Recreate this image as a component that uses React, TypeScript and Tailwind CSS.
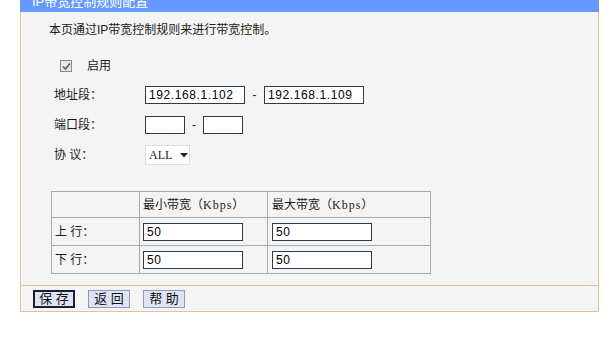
import React from "react";

const font = { fontFamily: '"Liberation Sans", "Noto Sans CJK SC", sans-serif' };
const serif = { fontFamily: '"Liberation Serif", "Noto Sans CJK SC", serif' };

function Field({ value, w }: { value: string; w: string }) {
  return (
    <div
      className={`${w} h-[18px] border border-[#2c3a4c] bg-white px-[3px] text-[12px] leading-[16px] tracking-[0.6px] text-black`}
    >
      {value}
    </div>
  );
}

function Btn({ label, active }: { label: string; active?: boolean }) {
  return (
    <div
      className={`w-[42px] h-[18px] flex items-center justify-center bg-[#dfe3f8] text-[13px] leading-none text-[#111] ${
        active ? "border-2 border-[#1a1f33]" : "border border-[#8e98b8]"
      }`}
    >
      {label}
    </div>
  );
}

export default function App() {
  return (
    <div className="w-[610px] h-[338px] bg-white overflow-hidden" style={font}>
      <div className="ml-[20px] w-[579px]">
        {/* title bar, cut at the top of the frame */}
        <div className="h-[12px] bg-[#6699ff] overflow-hidden">
          <div className="-mt-[7px] pl-[12px] text-[13px] leading-[18px] text-white">IP带宽控制规则配置</div>
        </div>

        <div className="border-x border-[#e4c09c] bg-[#f4f4f4]">
          <div className="pt-[12px] pl-[28px] text-[12px] leading-[12px] text-[#1a1a1a]">
            本页通过IP带宽控制规则来进行带宽控制。
          </div>

          <div className="mt-[23px] ml-[39px] flex items-center h-[14px]">
            <span className="w-[12px] h-[12px] border border-[#8a8a8a] bg-[#e6e6e6] flex items-center justify-center">
              <svg width="9" height="9" viewBox="0 0 9 9">
                <path d="M1 4.5 L3.5 7 L8 1.5" stroke="#5a5a5a" strokeWidth="1.6" fill="none" />
              </svg>
            </span>
            <span className="ml-[15px] text-[12px] text-[#1a1a1a]">启用</span>
          </div>

          <div className="mt-[13px] ml-[33px] flex items-center h-[18px] text-[12px] text-[#1a1a1a]">
            <span className="w-[91px]">地址段：</span>
            <Field value="192.168.1.102" w="w-[100px]" />
            <span className="w-[19px] text-center">-</span>
            <Field value="192.168.1.109" w="w-[100px]" />
          </div>

          <div className="mt-[12px] ml-[33px] flex items-center h-[18px] text-[12px] text-[#1a1a1a]">
            <span className="w-[91px]">端口段：</span>
            <Field value="" w="w-[40px]" />
            <span className="w-[18px] text-center">-</span>
            <Field value="" w="w-[40px]" />
          </div>

          <div className="mt-[11px] ml-[33px] flex items-center h-[20px] text-[12px] text-[#1a1a1a]">
            <span className="w-[91px]">协 议：</span>
            <div className="w-[45px] h-[20px] border border-[#dcdcdc] bg-white flex items-center pl-[3px] gap-[8px]">
              <span className="text-[12px] leading-none" style={serif}>ALL</span>
              <svg width="8" height="5" viewBox="0 0 8 5">
                <path d="M0 0 H8 L4 4.5 Z" fill="#222" />
              </svg>
            </div>
          </div>

          <table className="mt-[26px] ml-[30px] border-collapse text-[12px] text-[#1a1a1a]">
            <tbody>
              <tr className="h-[26px]">
                <td className="w-[88px] border border-[#a8a8a8]"></td>
                <td className="w-[128px] border border-[#a8a8a8] pl-[3px]">
                  最小带宽（<span style={serif} className="tracking-[1px]">Kbps</span>）
                </td>
                <td className="w-[163px] border border-[#a8a8a8] pl-[4px]">
                  最大带宽（<span style={serif} className="tracking-[1px]">Kbps</span>）
                </td>
              </tr>
              <tr className="h-[28px]">
                <td className="border border-[#a8a8a8] pl-[3px]">上 行：</td>
                <td className="border border-[#a8a8a8] pl-[3px]">
                  <Field value="50" w="w-[100px]" />
                </td>
                <td className="border border-[#a8a8a8] pl-[4px]">
                  <Field value="50" w="w-[100px]" />
                </td>
              </tr>
              <tr className="h-[28px]">
                <td className="border border-[#a8a8a8] pl-[3px]">下 行：</td>
                <td className="border border-[#a8a8a8] pl-[3px]">
                  <Field value="50" w="w-[100px]" />
                </td>
                <td className="border border-[#a8a8a8] pl-[4px]">
                  <Field value="50" w="w-[100px]" />
                </td>
              </tr>
            </tbody>
          </table>

          <div className="h-[11px]" />
          <div className="border-t border-b border-[#e4c09c] h-[27px] flex items-center gap-[13px] pl-[12px]">
            <Btn label="保 存" active />
            <Btn label="返 回" />
            <Btn label="帮 助" />
          </div>
        </div>
      </div>
    </div>
  );
}
